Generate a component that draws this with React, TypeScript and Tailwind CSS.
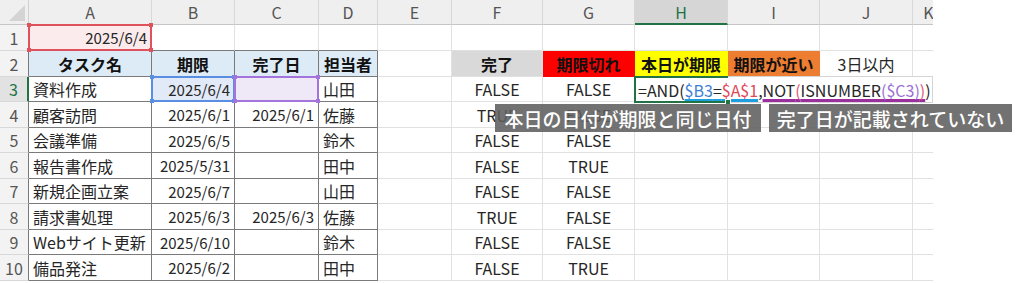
import React from "react";

const COLS = ["A", "B", "C", "D", "E", "F", "G", "H", "I", "J", "K"];

const tasks = [
  ["資料作成", "2025/6/4", "", "山田", "FALSE", "FALSE"],
  ["顧客訪問", "2025/6/1", "2025/6/1", "佐藤", "TRUE", "FALSE"],
  ["会議準備", "2025/6/5", "", "鈴木", "FALSE", "FALSE"],
  ["報告書作成", "2025/5/31", "", "田中", "FALSE", "TRUE"],
  ["新規企画立案", "2025/6/7", "", "山田", "FALSE", "FALSE"],
  ["請求書処理", "2025/6/3", "2025/6/3", "佐藤", "TRUE", "FALSE"],
  ["Webサイト更新", "2025/6/10", "", "鈴木", "FALSE", "FALSE"],
  ["備品発注", "2025/6/2", "", "田中", "FALSE", "TRUE"],
];

type Fill = "hd" | "gray" | "red" | "yel" | "org" | "pink" | "blue" | "purple";
type CellSpec = { t?: string; a?: "l" | "r" | "c"; b?: boolean; fill?: Fill; frame?: "red" | "blue" | "purple" };

const fillBg: Record<Fill, string> = {
  hd: "bg-[#ddebf7]",
  gray: "bg-[#d9d9d9] border-r-[#d9d9d9] border-b-[#d9d9d9]",
  red: "bg-[#ff0000] border-r-[#ff0000] border-b-[#ff0000]",
  yel: "bg-[#ffff00] border-r-[#ffff00] border-b-[#ffff00]",
  org: "bg-[#ed7d31] border-r-[#ed7d31] border-b-[#ed7d31]",
  pink: "bg-[#fcebec]",
  blue: "bg-[#e2eaf8]",
  purple: "bg-[#eee8f7]",
};

const inTable = (r: number, c: number) => r >= 2 && r <= 10 && c >= 1 && c <= 4;

// dates are right aligned and a touch narrower, like Excel's default font
function spec(r: number, c: number): CellSpec {
  if (r === 1 && c === 1) return { t: "2025/6/4", a: "r", fill: "pink", frame: "red" };
  if (r === 2) {
    const heads = ["タスク名", "期限", "完了日", "担当者"];
    if (c >= 1 && c <= 4) return { t: heads[c - 1], a: "c", b: true, fill: "hd" };
    if (c === 6) return { t: "完了", a: "c", b: true, fill: "gray" };
    if (c === 7) return { t: "期限切れ", a: "c", b: true, fill: "red" };
    if (c === 8) return { t: "本日が期限", a: "c", b: true, fill: "yel" };
    if (c === 9) return { t: "期限が近い", a: "c", b: true, fill: "org" };
    if (c === 10) return { t: "3日以内", a: "c" };
  }
  if (r >= 3) {
    const row = tasks[r - 3];
    if (c === 1) return { t: row[0], a: "l" };
    if (c === 2) return r === 3 ? { t: row[1], a: "r", fill: "blue", frame: "blue" } : { t: row[1], a: "r" };
    if (c === 3) return r === 3 ? { t: "", a: "r", fill: "purple", frame: "purple" } : { t: row[2], a: "r" };
    if (c === 4) return { t: row[3], a: "l" };
    if (c === 6) return { t: row[4], a: "c" };
    if (c === 7) return { t: row[5], a: "c" };
  }
  return {};
}

function RefFrame({ color }: { color: "red" | "blue" | "purple" }) {
  const line =
    color === "red" ? "border-[#e0525b]" : color === "blue" ? "border-[#5a8ee2]" : "border-[#a374dc]";
  const dot = color === "red" ? "bg-[#e0525b]" : color === "blue" ? "bg-[#5a8ee2]" : "bg-[#a374dc]";
  return (
    <div className={`pointer-events-none absolute -left-px -top-px -right-px -bottom-px z-10 border-2 ${line}`}>
      <div className={`absolute -left-[3px] -top-[3px] h-[4px] w-[4px] ${dot}`} />
      <div className={`absolute -right-[3px] -top-[3px] h-[4px] w-[4px] ${dot}`} />
      <div className={`absolute -left-[3px] -bottom-[3px] h-[4px] w-[4px] ${dot}`} />
      <div className={`absolute -right-[3px] -bottom-[3px] h-[4px] w-[4px] ${dot}`} />
    </div>
  );
}

function FormulaEdit() {
  return (
    <>
      <div className="absolute -left-px -top-px z-20 flex h-[27px] w-[299px] items-center whitespace-nowrap border border-[#d4d4d4] bg-white pl-[3px] text-[16px] text-[#262626]">
        <span>=AND(</span>
        <span className="underline decoration-[#1ea0e0] decoration-[3px] underline-offset-[2px] [text-decoration-skip-ink:none]">
          <span className="text-[#3d7fd6]">$B3</span>=<span className="text-[#e0485a]">$A$1</span>
        </span>
        <span>,</span>
        <span className="underline decoration-[#9b2f9e] decoration-[3px] underline-offset-[2px] [text-decoration-skip-ink:none]">
          NOT<span className="text-[#e0587a]">(</span>ISNUMBER
          <span className="text-[#9b6fd6]">($C3)</span>
          <span className="text-[#e0587a]">)</span>
        </span>
        <span>)</span>
      </div>
      <div className="pointer-events-none absolute -left-px -top-px z-30 h-[27px] w-[94px] border-2 border-r-0 border-[#217346]">
        <div className="absolute -right-[3px] -bottom-[4px] h-[6px] w-[6px] border border-white bg-[#217346]" />
      </div>
    </>
  );
}

function Cell({ r, c }: { r: number; c: number }) {
  if (r === 0 && c === 0) {
    return (
      <div className="relative border-r border-b border-r-[#d0d0d0] border-b-[#c6c6c6] bg-[#efefef]">
        <svg className="absolute right-[3px] bottom-[3px]" width="16" height="16" viewBox="0 0 16 16">
          <polygon points="16,0 16,16 0,16" fill="#d4d4d4" />
        </svg>
      </div>
    );
  }
  if (r === 0) {
    const active = c === 8;
    return (
      <div
        className={`flex items-center justify-center border-r border-r-[#d8d8d8] text-[16px] ${
          active
            ? "border-b-2 border-b-[#217346] bg-[#d6d6d6] text-[#217346]"
            : "border-b border-b-[#c6c6c6] bg-[#efefef] text-[#555]"
        }`}
      >
        {COLS[c - 1]}
      </div>
    );
  }
  if (c === 0) {
    const active = r === 3;
    const dark = r >= 2;
    return (
      <div
        className={`flex items-center justify-center border-b border-b-[#d8d8d8] text-[16px] ${
          active
            ? "border-r-2 border-r-[#217346] bg-[#e2e2e2] text-[#217346]"
            : dark
              ? "border-r border-r-[#7a7a7a] bg-[#f3f3f3] text-[#555]"
              : "border-r border-r-[#c6c6c6] bg-[#f3f3f3] text-[#555]"
        }`}
      >
        {r}
      </div>
    );
  }

  const s = spec(r, c);
  const rightDark = inTable(r, c) || inTable(r, c + 1);
  const bottomDark = inTable(r, c) || inTable(r + 1, c);
  const align = s.a === "r" ? "justify-end pr-[4px] text-[15px]" : s.a === "c" ? "justify-center" : "justify-start pl-[4px]";
  const borders = `${rightDark ? "border-r-[#7a7a7a]" : "border-r-[#e1e1e1]"} ${
    bottomDark ? "border-b-[#7a7a7a]" : "border-b-[#e1e1e1]"
  }`;
  return (
    <div
      className={`relative flex items-center whitespace-nowrap border-r border-b ${borders} ${align} ${
        s.b ? "font-bold text-[#111]" : ""
      } ${s.fill ? fillBg[s.fill] : ""}`}
    >
      {s.t}
      {s.frame && <RefFrame color={s.frame} />}
      {r === 3 && c === 8 && <FormulaEdit />}
    </div>
  );
}

export default function App() {
  const rows = Array.from({ length: 11 }, (_, i) => i);
  const cols = Array.from({ length: 12 }, (_, i) => i);
  return (
    <div className="relative h-[283px] w-[1024px] overflow-hidden bg-white font-['Noto_Sans_CJK_JP',sans-serif] text-[16px] leading-none text-[#262626]">
      <div className="w-[933px] overflow-hidden">
        <div className="grid w-[945px] grid-cols-[29px_123px_83px_84px_59px_74px_91px_92px_93px_92px_93px_32px] grid-rows-[25px_26px_26px_25px_26px_25px_26px_25px_26px_25px_26px]">
          {rows.map((r) => cols.map((c) => <Cell key={`${r}-${c}`} r={r} c={c} />))}
        </div>
      </div>

      {/* callouts laid over the sheet */}
      <div className="absolute left-[495px] top-[104px] z-40 flex h-[28px] w-[266px] items-center justify-center bg-[#5f5f5f]/[0.88] text-[19px] font-medium text-white">
        本日の日付が期限と同じ日付
      </div>
      <div className="absolute left-[769px] top-[104px] z-40 flex h-[28px] w-[243px] items-center justify-center bg-[#5f5f5f]/[0.88] text-[19px] font-medium text-white">
        完了日が記載されていない
      </div>
    </div>
  );
}
